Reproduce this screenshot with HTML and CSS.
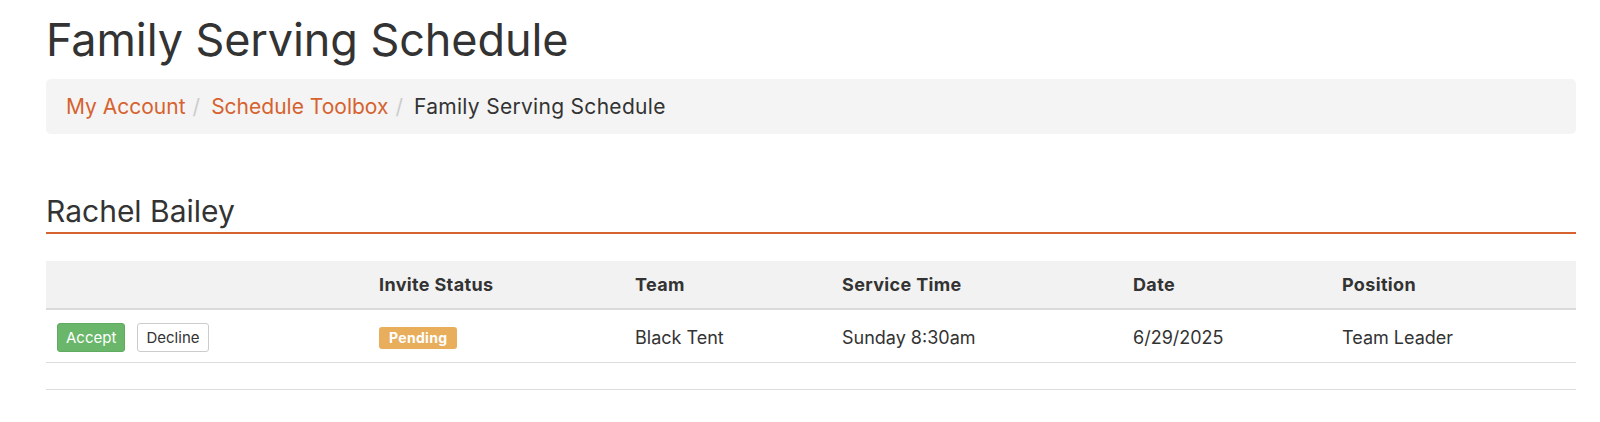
FILE: index.html
```html
<!DOCTYPE html>
<html lang="en">
<head>
<meta charset="utf-8">
<title>Family Serving Schedule</title>
<link rel="stylesheet" href="styles.css">
</head>
<body>
<div class="page">
  <h1 class="title">Family Serving Schedule</h1>
  <nav class="breadcrumb">
    <a class="crumb-link" href="#">My Account</a>
    <span class="sep">/</span>
    <a class="crumb-link" href="#">Schedule Toolbox</a>
    <span class="sep">/</span>
    <span class="crumb-current">Family Serving Schedule</span>
  </nav>

  <h3 class="person">Rachel Bailey</h3>

  <table class="schedule">
    <colgroup>
      <col class="c1"><col class="c2"><col class="c3"><col class="c4"><col class="c5"><col class="c6">
    </colgroup>
    <thead>
      <tr>
        <th></th>
        <th>Invite Status</th>
        <th>Team</th>
        <th>Service Time</th>
        <th>Date</th>
        <th>Position</th>
      </tr>
    </thead>
    <tbody>
      <tr>
        <td>
          <div class="actions">
            <button class="btn btn-accept">Accept</button>
            <button class="btn btn-decline">Decline</button>
          </div>
        </td>
        <td><span class="badge">Pending</span></td>
        <td>Black Tent</td>
        <td>Sunday 8:30am</td>
        <td>6/29/2025</td>
        <td>Team Leader</td>
      </tr>
    </tbody>
  </table>
  <div class="table-end"></div>
</div>
</body>
</html>
```

FILE: styles.css
```css
* { box-sizing: border-box; }

html, body {
  margin: 0;
  padding: 0;
  background: #ffffff;
}

body {
  font-family: Inter, "Liberation Sans", sans-serif;
  color: #333333;
}

.page {
  width: 1530px;
  margin-left: 46px;
}

.title {
  margin: 15px 0 0 0;
  font-size: 45px;
  line-height: 50px;
  font-weight: 400;
  color: #333333;
  letter-spacing: -0.1px;
}

.breadcrumb {
  margin-top: 14px;
  height: 55px;
  background: #f4f4f4;
  border-radius: 5px;
  padding: 0 20px;
  display: flex;
  align-items: center;
  font-size: 21px;
}

.crumb-link {
  color: #d6622f;
  text-decoration: none;
}

.sep {
  color: #cccccc;
  margin: 0 11px 0 7px;
}

.crumb-current {
  color: #333333;
  letter-spacing: 0.3px;
}

.person {
  margin: 59px 0 0 0;
  font-size: 30px;
  line-height: 36px;
  font-weight: 400;
  padding-bottom: 3px;
  border-bottom: 2px solid #d6622f;
  color: #333333;
}

.schedule {
  margin-top: 27px;
  width: 1530px;
  border-collapse: collapse;
  table-layout: fixed;
  font-size: 18px;
}

.c1 { width: 323px; }
.c2 { width: 256px; }
.c3 { width: 207px; }
.c4 { width: 291px; }
.c5 { width: 209px; }
.c6 { width: 244px; }

.schedule th {
  background: #f2f2f2;
  height: 48px;
  padding: 0 10px;
  text-align: left;
  font-weight: 700;
  font-size: 18px;
  letter-spacing: 0.35px;
  border-bottom: 2px solid #dadada;
}

.schedule td {
  height: 53px;
  padding: 3px 10px 0 10px;
  border-bottom: 1px solid #dddddd;
  vertical-align: middle;
}

.actions {
  display: flex;
  gap: 12px;
  padding-left: 1px;
}

.btn {
  font-family: Inter, "Liberation Sans", sans-serif;
  font-size: 15px;
  height: 29px;
  padding: 0 8px;
  border-radius: 3px;
  line-height: 27px;
  cursor: pointer;
}

.btn-accept {
  background: #6ab66a;
  border: 1px solid #5fab5f;
  color: #ffffff;
  width: 68px;
}

.btn-decline {
  background: #ffffff;
  border: 1px solid #cccccc;
  color: #333333;
  width: 72px;
}

.badge {
  display: inline-block;
  background: #e9ae5c;
  color: #ffffff;
  font-weight: 700;
  font-size: 14px;
  line-height: 22px;
  height: 22px;
  padding: 0 10px;
  border-radius: 3px;
  margin-top: 2px;
  letter-spacing: 0.3px;
}

.table-end {
  margin-top: 26px;
  border-top: 1px solid #dddddd;
}
```
